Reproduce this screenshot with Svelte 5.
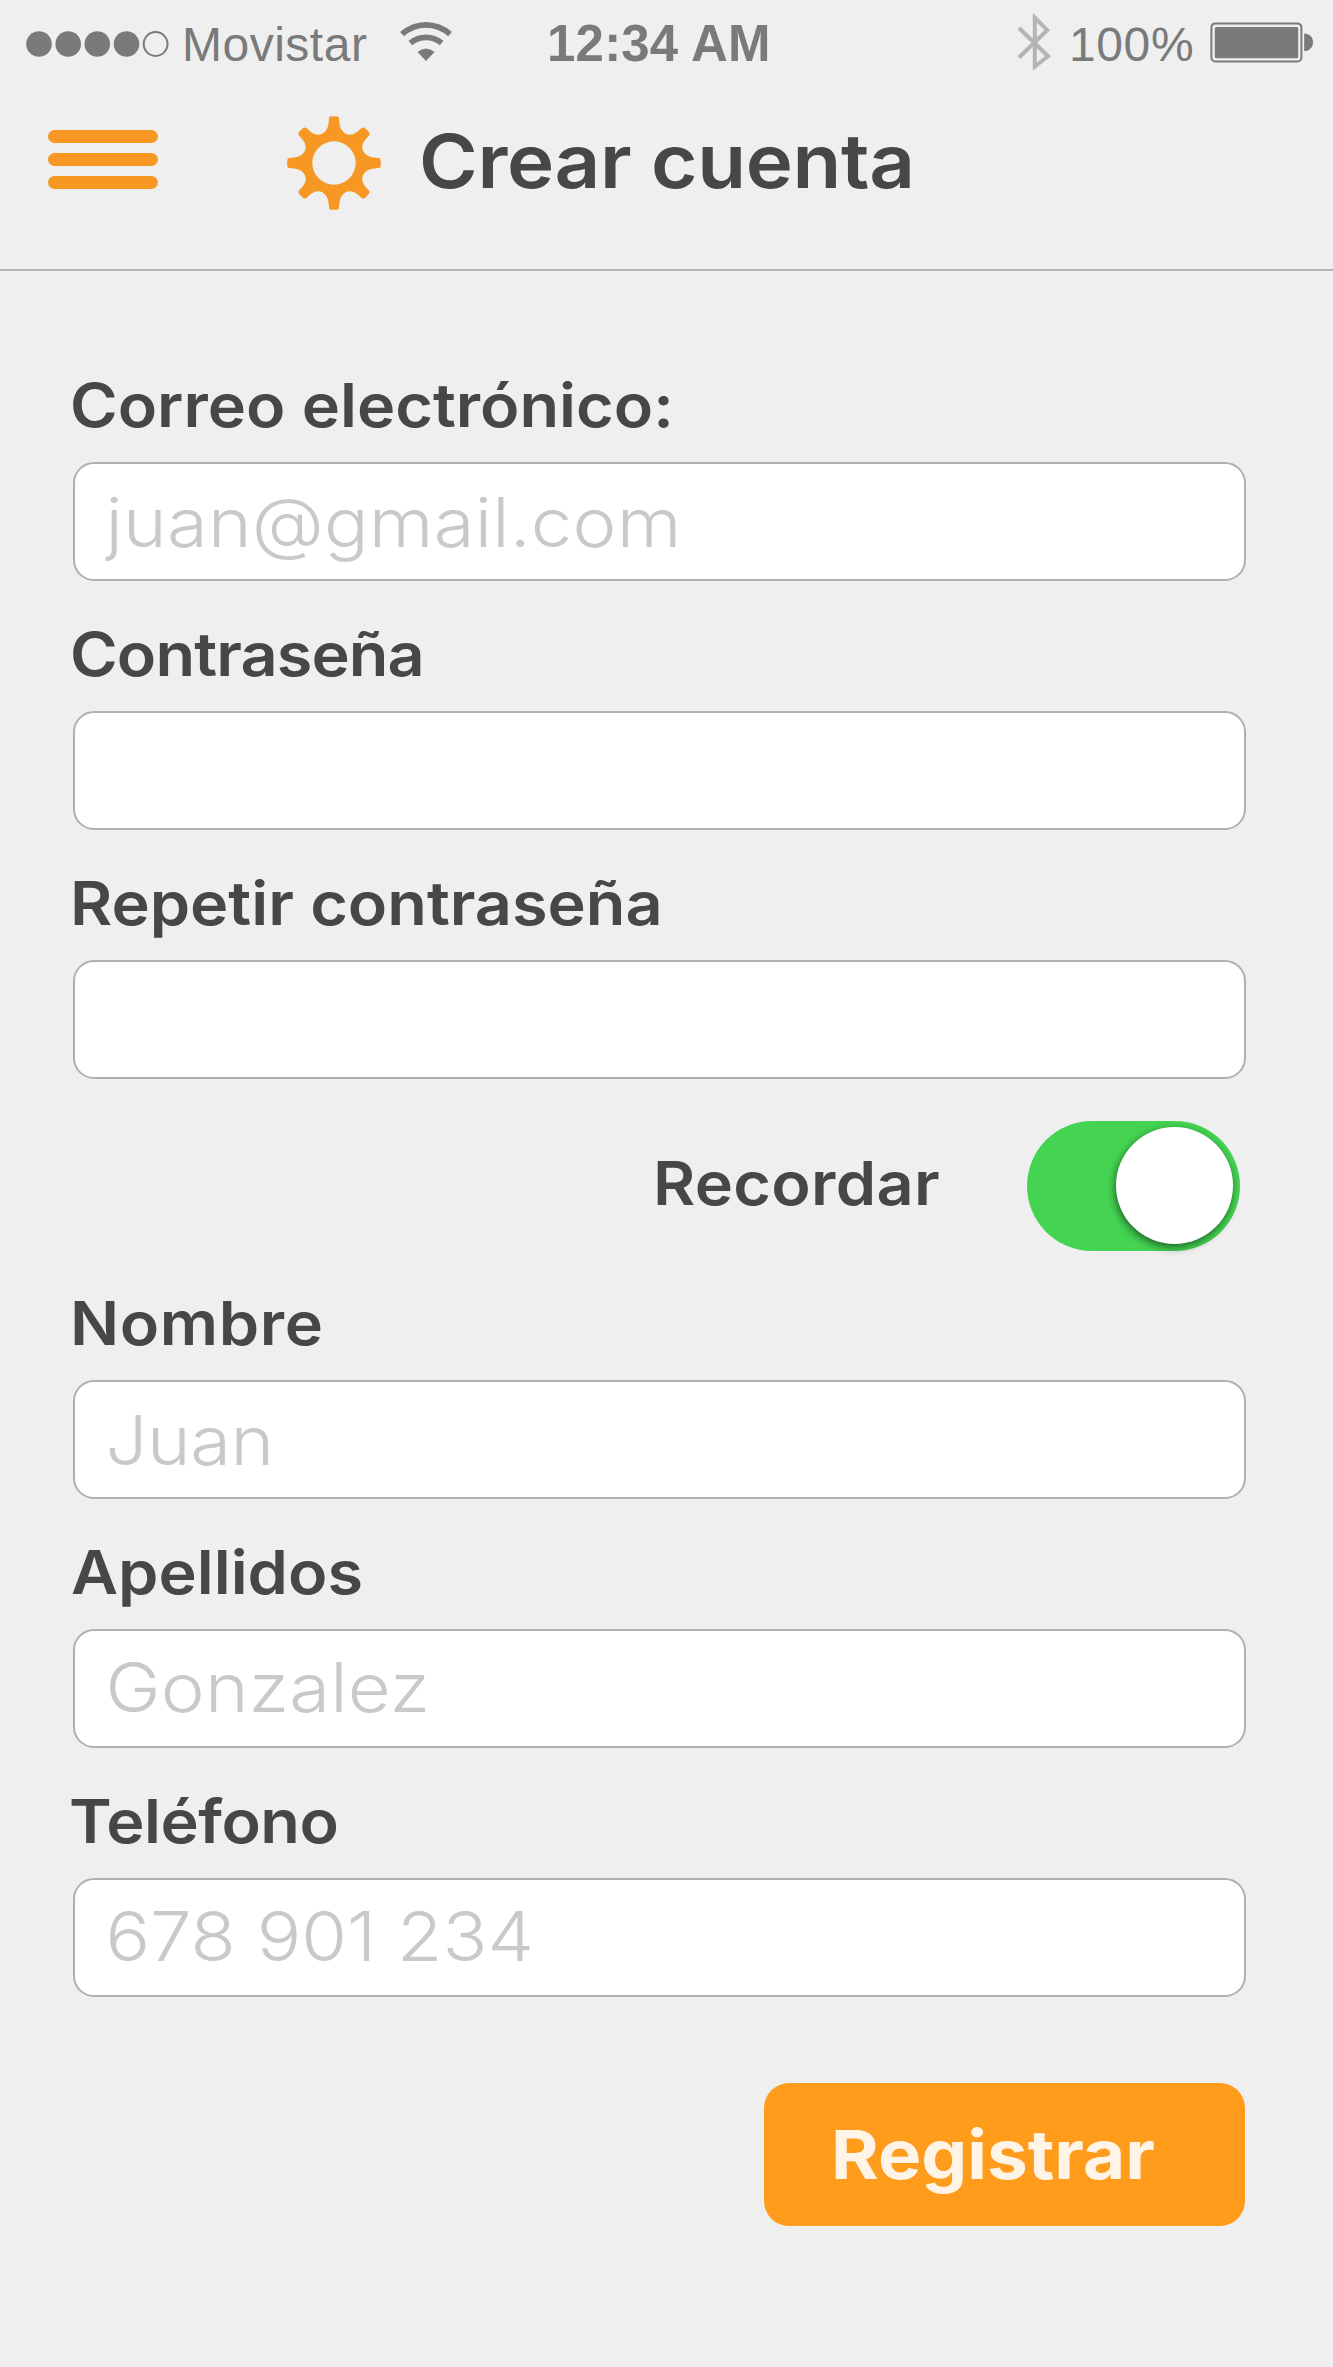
<script>
  // One quarter of the cog outline (two half gaps around a diagonal tooth), centred on 0,0.
  const quarter = [
    [-4.7, -46.3], [-5.7, -38.3],
    [-6.7, -32.7], [-10.7, -28.3], [-15.7, -28.3],
    [-20.7, -28.3], [-23.3, -31.3], [-27.6, -35],
    [-29.6, -36.6], [-31.5, -34.5], [-33, -33],
    [-34.5, -31.5], [-36.6, -29.6], [-35, -27.6],
    [-31.3, -23.3], [-28.3, -20.7], [-28.3, -15.7],
    [-28.3, -10.7], [-32.7, -6.7], [-38.3, -5.7],
    [-46.3, -4.7], [-47.4, 0], [-46.3, 4.7]
  ];

  function cogPath() {
    let pts = quarter;
    let d = `M${pts[0]}`;
    for (let i = 0; i < 4; i++) {
      const p = pts.map(([x, y]) => `${x} ${y}`);
      d += `L${p[1]}C${p.slice(2, 5)}C${p.slice(5, 8)}C${p.slice(8, 11)}C${p.slice(11, 14)}C${p.slice(14, 17)}C${p.slice(17, 20)}L${p[20]}Q${p[21]} ${p[22]}`;
      pts = pts.map(([x, y]) => [y, -x]);
    }
    return d + 'Z M-21.7 0a21.7 21.7 0 1 0 43.4 0a21.7 21.7 0 1 0 -43.4 0Z';
  }

  const cog = cogPath();

  const access = [
    { id: 'email', label: 'Correo electrónico:', type: 'email', placeholder: 'juan@gmail.com' },
    { id: 'password', label: 'Contraseña', type: 'password', placeholder: '' },
    { id: 'repeat', label: 'Repetir contraseña', type: 'password', placeholder: '' }
  ];
  const personal = [
    { id: 'name', label: 'Nombre', type: 'text', placeholder: 'Juan' },
    { id: 'surname', label: 'Apellidos', type: 'text', placeholder: 'Gonzalez' },
    { id: 'phone', label: 'Teléfono', type: 'tel', placeholder: '678 901 234' }
  ];

  let remember = $state(true);
</script>

{#snippet field(f)}
  <div class="field {f.id}">
    <label for={f.id}>{f.label}</label>
    <div class="box">
      <input id={f.id} type={f.type} placeholder={f.placeholder} />
    </div>
  </div>
{/snippet}

<main class="screen">
  <header>
    <div class="status">
      <div class="carrier">
        <svg class="signal" width="144" height="28" viewBox="0 0 144 28">
          <circle cx="13" cy="14" r="12.8" />
          <circle cx="42.2" cy="14" r="12.8" />
          <circle cx="71.3" cy="14" r="12.8" />
          <circle cx="100.5" cy="14" r="12.8" />
          <circle cx="129.6" cy="14" r="11.9" class="empty" />
        </svg>
        <span class="operator">Movistar</span>
        <svg class="wifi" width="54" height="40" viewBox="0 0 54 40">
          <path class="arc" d="M3 12.2Q13.5 2.9 27 2.9T51 12.2" />
          <path class="arc" d="M11.4 20.9Q18.4 15.3 27 15.3T42.6 20.9" />
          <path d="M18.5 30Q27 22.8 35.5 30L27 39Z" />
        </svg>
      </div>
      <time>12:34 AM</time>
      <div class="power">
        <svg class="bluetooth" width="36" height="58" viewBox="0 0 36 58">
          <path d="M2 15L31 43.2L17.8 53.6V4.6L30.2 17.2L2 44.5" />
        </svg>
        <span class="level">100%</span>
        <svg class="battery" width="104" height="42" viewBox="0 0 104 42">
          <rect x="1.4" y="1.4" width="90" height="38" rx="4" class="shell" />
          <rect x="4.8" y="5" width="83.4" height="31.2" rx="1.5" />
          <path d="M94.2 11.5C99.5 11.5 103 15.2 103 20.2S99.5 29 94.2 29Z" />
        </svg>
      </div>
    </div>
    <div class="title">
      <button class="menu" aria-label="Menú"><i></i><i></i><i></i></button>
      <svg class="cog" width="96" height="96" viewBox="-48 -48 96 96">
        <path fill-rule="evenodd" d={cog} />
      </svg>
      <h1>Crear cuenta</h1>
    </div>
  </header>

  <form>
    {#each access as f}{@render field(f)}{/each}
    <div class="remember">
      <span>Recordar</span>
      <button
        type="button"
        class="switch"
        class:on={remember}
        role="switch"
        aria-checked={remember}
        aria-label="Recordar"
        onclick={() => (remember = !remember)}
      ><i></i></button>
    </div>
    {#each personal as f}{@render field(f)}{/each}
    <button type="button" class="submit"><span>Registrar</span></button>
  </form>
</main>

<style>
  :global(body) {
    background: #efefef;
  }
  .screen {
    box-sizing: border-box;
    width: 1333px;
    height: 2367px;
    background: #efefef;
    color: #474747;
    font-family: Inter, 'Open Sans', sans-serif;
    overflow: hidden;
  }
  button {
    border: 0;
    padding: 0;
    margin: 0;
    font: inherit;
    cursor: pointer;
  }
  svg {
    display: block;
    flex: none;
  }

  header {
    box-sizing: border-box;
    height: 271px;
    border-bottom: 2px solid #b4b4b4;
  }
  .status {
    display: grid;
    grid-template-columns: 547px 1fr auto;
    height: 88px;
    padding-right: 19px;
    color: #7a7a7a;
    fill: #7a7a7a;
    font-family: 'Liberation Sans', Arial, sans-serif;
    white-space: nowrap;
  }
  .carrier,
  .power {
    display: flex;
    align-items: center;
  }
  .signal {
    margin-left: 26px;
  }
  .signal .empty {
    fill: none;
    stroke: #7a7a7a;
    stroke-width: 2;
  }
  .operator,
  .level {
    padding-top: 2px;
    font-size: 48px;
    line-height: 86px;
  }
  .operator {
    width: 187px;
    margin-left: 12px;
    letter-spacing: 0.5px;
  }
  .wifi {
    margin: 0 0 4px 30px;
  }
  .wifi .arc {
    fill: none;
    stroke: #7a7a7a;
    stroke-width: 5.8;
  }
  time {
    font-size: 51px;
    font-weight: 700;
    line-height: 87px;
    letter-spacing: 0.2px;
  }
  .bluetooth {
    margin: 0 16px 4px 0;
    fill: none;
    stroke: #b4b4b4;
    stroke-width: 4;
  }
  .level {
    width: 124px;
    letter-spacing: 0.6px;
  }
  .battery {
    margin-left: 17px;
    margin-bottom: 3px;
  }
  .battery .shell {
    fill: none;
    stroke: #7a7a7a;
    stroke-width: 2;
  }

  .title {
    display: flex;
    align-items: center;
    height: 150px;
    padding-left: 48px;
  }
  .menu {
    display: flex;
    flex-direction: column;
    gap: 10px;
    width: 110px;
    margin-bottom: 8px;
    background: none;
  }
  .menu i {
    height: 13px;
    border-radius: 6.5px;
    background: #f79824;
  }
  .cog {
    margin-left: 128px;
    fill: #f79824;
  }

  h1,
  label,
  .remember span,
  .submit span {
    transform: scaleX(1.07);
    transform-origin: left center;
    white-space: nowrap;
  }
  h1 {
    margin: 0 0 5px 37px;
    font-size: 74.5px;
    font-weight: 600;
    line-height: 90px;
    letter-spacing: -0.3px;
  }

  form {
    display: flex;
    flex-direction: column;
    gap: 43px;
    padding: 104px 87px 0 73px;
  }
  .field {
    display: flex;
    flex-direction: column;
    gap: 27px;
  }
  label,
  .remember span {
    height: 60px;
    font-size: 60.5px;
    font-weight: 600;
    line-height: 60px;
  }
  label {
    margin-left: -3px;
  }
  .box {
    box-sizing: border-box;
    height: 119px;
    border: 2px solid #b0b0b0;
    border-radius: 21px;
    background: #fff;
    overflow: hidden;
  }
  input {
    display: block;
    box-sizing: border-box;
    width: 91.7%;
    height: 115px;
    margin: 0;
    padding: 0 28px;
    border: 0;
    background: none;
    color: #474747;
    font: 350 68px Inter, 'Open Sans', sans-serif;
    outline: none;
    transform: scaleX(1.09);
    transform-origin: left center;
  }
  input::placeholder {
    color: #c9c9c9;
    opacity: 1;
  }
  .email input { letter-spacing: 0.2px; }
  .password label { letter-spacing: -0.8px; }
  .name label { letter-spacing: 0.6px; }
  .name input { letter-spacing: -0.4px; }
  .surname label { margin-left: -2px; }
  .surname input { padding-bottom: 4px; letter-spacing: 0.2px; }
  .phone label { margin-left: -4px; letter-spacing: -0.45px; }
  .phone input { padding-bottom: 4px; }

  .remember {
    display: flex;
    align-items: center;
    justify-content: flex-end;
    height: 128px;
    padding-right: 6px;
  }
  .remember span {
    width: 374px;
    margin-bottom: 6px;
    letter-spacing: 0.3px;
  }
  .switch {
    flex: none;
    display: flex;
    align-items: center;
    box-sizing: border-box;
    width: 213px;
    height: 130px;
    padding: 0 7px 1px;
    border-radius: 65px;
    background: #d4d4d4;
  }
  .switch.on {
    justify-content: flex-end;
    background: #44d452;
  }
  .switch i {
    width: 117px;
    height: 117px;
    border-radius: 50%;
    background: #fff;
    box-shadow: -1px 3px 8px rgba(0, 0, 0, 0.55);
  }

  .submit {
    align-self: flex-end;
    box-sizing: border-box;
    width: 481px;
    height: 143px;
    margin: 43px 1px 0 0;
    padding-left: 67px;
    border-radius: 25px;
    background: #ff9c1b;
    color: #fff4e6;
    font-size: 68px;
    font-weight: 700;
    line-height: 143px;
    text-align: left;
  }
  .submit span {
    display: block;
  }
</style>
